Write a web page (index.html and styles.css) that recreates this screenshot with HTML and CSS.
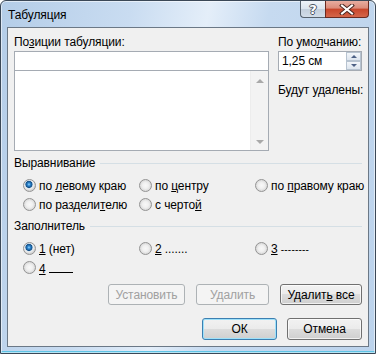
FILE: index.html
```html
<!DOCTYPE html>
<html lang="ru">
<head>
  <meta charset="UTF-8">
  <title>Табуляция</title>
  <link rel="stylesheet" href="styles.css">
</head>
<body>

  <div class="window">
    <!-- Title bar with caption buttons -->
    <div class="titlebar">
      <span class="title">Табуляция</span>
      <div class="caption-buttons">
        <span class="cap-btn cap-help">?</span>
        <span class="cap-btn cap-close">
          <svg width="16" height="11" viewBox="0 0 16 11">
            <path d="M3 1.5 L13 9.5 M13 1.5 L3 9.5" stroke="#4a2620" stroke-width="4" stroke-linecap="square"/>
            <path d="M3 1.5 L13 9.5 M13 1.5 L3 9.5" stroke="#ffffff" stroke-width="2" stroke-linecap="square"/>
          </svg>
        </span>
      </div>
    </div>

    <div class="client">
      <!-- Tab positions and default step -->
      <div class="top-area">
        <div class="col-left">
          <div class="label">По<u>з</u>иции табуляции:</div>
          <div class="edit"></div>
          <div class="listbox">
            <div class="list-body"></div>
            <div class="vscroll">
              <span class="arrow arrow-up"></span>
              <span class="arrow arrow-down"></span>
            </div>
          </div>
        </div>
        <div class="col-right">
          <div class="label">По умо<u>л</u>чанию:</div>
          <div class="spin">
            <span class="spin-value">1,25 см</span>
            <div class="spin-btns">
              <span class="spin-btn"><span class="tri tri-up"></span></span>
              <span class="spin-btn"><span class="tri tri-down"></span></span>
            </div>
          </div>
          <div class="label removed">Будут удалены:</div>
        </div>
      </div>

      <!-- Alignment -->
      <div class="group-head"><span>Выравнивание</span><span class="rule"></span></div>
      <div class="radio-grid">
        <label class="option"><span class="radio checked"></span><span>по <u>л</u>евому краю</span></label>
        <label class="option"><span class="radio"></span><span>по <u>ц</u>ентру</span></label>
        <label class="option"><span class="radio"></span><span>по <u>п</u>равому краю</span></label>
        <label class="option"><span class="radio"></span><span>по раздели<u>т</u>елю</span></label>
        <label class="option"><span class="radio"></span><span>с черто<u>й</u></span></label>
      </div>

      <!-- Leader -->
      <div class="group-head"><span>Заполнитель</span><span class="rule"></span></div>
      <div class="radio-grid">
        <label class="option"><span class="radio checked"></span><span><u>1</u> (нет)</span></label>
        <label class="option"><span class="radio"></span><span><u>2</u> .......</span></label>
        <label class="option"><span class="radio"></span><span><u>3</u> <span class="dashes">--------</span></span></label>
        <label class="option"><span class="radio"></span><span><u>4</u> <span class="leader-line"></span></span></label>
      </div>

      <!-- Buttons -->
      <div class="btn-row">
        <button class="btn btn-set" disabled>Установить</button>
        <button class="btn btn-del" disabled>Удалить</button>
        <button class="btn btn-delall">Удалит<u>ь</u> все</button>
      </div>
      <div class="btn-row btn-row-main">
        <button class="btn btn-main btn-default">ОК</button>
        <button class="btn btn-main">Отмена</button>
      </div>
    </div>
  </div>

</body>
</html>
```

FILE: styles.css
```css
/* Page reset */
body {
  margin: 0;
  background: #ffffff;
  font-family: 'Liberation Sans', Arial, sans-serif;
  font-size: 12px;
  letter-spacing: -0.1px;
  color: #000;
}

/* Aero window frame */
.window {
  width: 376px;
  height: 354px;
  box-sizing: border-box;
  border: 1px solid #3b4857;
  border-radius: 6px 6px 0 0;
  padding: 0 6px 6px 6px;
  background: linear-gradient(100deg, #b4cde8 0%, #c9dcf1 30%, #e4eef9 48%, #c6daf0 62%, #bcd3ec 100%);
  box-shadow: inset 0 0 0 1px rgba(255, 255, 255, 0.55), inset 0 -2px 0 #5fc4e6;
  display: flex;
  flex-direction: column;
}

.titlebar {
  height: 26px;
  display: flex;
  align-items: flex-start;
}

.title {
  margin: 7px 0 0 1px;
  line-height: 15px;
  font-size: 12px;
}

.caption-buttons {
  margin-left: auto;
  display: flex;
}

.cap-btn {
  height: 17px;
  box-sizing: border-box;
  border: 1px solid #57626e;
  border-top: none;
  display: flex;
  align-items: center;
  justify-content: center;
}

.cap-help {
  width: 25px;
  border-right: none;
  border-radius: 0 0 0 4px;
  background: linear-gradient(#eef3f8 0%, #dbe4ee 50%, #c3cfdc 51%, #d2dde8 100%);
  font-family: 'DejaVu Sans', sans-serif;
  font-weight: bold;
  font-size: 13px;
  color: #fff;
  text-shadow: -1px 0 #4a5563, 1px 0 #4a5563, 0 -1px #4a5563, 0 1px #4a5563;
}

.cap-close {
  width: 44px;
  border-color: #6a2a20;
  border-radius: 0 0 4px 0;
  background: linear-gradient(#e8ada0 0%, #dc8b79 45%, #c8452a 50%, #d4664a 100%);
}

/* Client area */
.client {
  flex: 1;
  border: 1px solid #6b7886;
  background: #f0f0f0;
  padding: 7px 6px 0 6px;
}

.top-area {
  display: grid;
  grid-template-columns: 255px 84px;
  column-gap: 9px;
}

.label {
  line-height: 15px;
  height: 15px;
  margin-bottom: 1px;
  white-space: nowrap;
}

.label.removed {
  margin-top: 12px;
}

.edit {
  height: 20px;
  box-sizing: border-box;
  border: 1px solid #a5abb3;
  background: #fff;
}

.listbox {
  height: 80px;
  box-sizing: border-box;
  border: 1px solid #a5abb3;
  border-top: none;
  background: #fff;
  display: flex;
}

.list-body {
  flex: 1;
}

.vscroll {
  width: 17px;
  background: #f3f3f3;
  border-left: 1px solid #ededed;
  display: flex;
  flex-direction: column;
  justify-content: space-between;
  align-items: center;
  padding: 8px 0 6px;
}

.arrow {
  width: 0;
  height: 0;
  border-left: 4px solid transparent;
  border-right: 4px solid transparent;
}

.arrow-up {
  border-bottom: 4px solid #a9a9a9;
}

.arrow-down {
  border-top: 4px solid #a9a9a9;
}

.spin {
  height: 20px;
  box-sizing: border-box;
  border: 1px solid #a5abb3;
  background: #fff;
  display: flex;
  align-items: center;
  padding-left: 3px;
}

.spin-value {
  flex: 1;
  line-height: 15px;
  white-space: nowrap;
}

.spin-btns {
  display: flex;
  flex-direction: column;
  align-self: stretch;
}

.spin-btn {
  width: 15px;
  height: 9px;
  box-sizing: border-box;
  border: 1px solid #b7c3d0;
  background: linear-gradient(#f3f6fa, #dde5ee);
  display: flex;
  align-items: center;
  justify-content: center;
}

.tri {
  width: 0;
  height: 0;
  border-left: 3px solid transparent;
  border-right: 3px solid transparent;
}

.tri-up {
  border-bottom: 3px solid #4d6185;
}

.tri-down {
  border-top: 3px solid #4d6185;
}

/* Group headers with rule */
.group-head {
  display: flex;
  align-items: center;
  line-height: 15px;
  margin-top: 5px;
}

.group-head .rule {
  flex: 1;
  height: 1px;
  background: #d5dfe5;
  margin-left: 5px;
}

.radio-grid {
  display: grid;
  grid-template-columns: 116px 116px 116px;
  grid-auto-rows: 19px;
  padding-left: 9px;
  margin-top: 5px;
}

.option {
  display: flex;
  align-items: center;
  gap: 3px;
  white-space: nowrap;
}

.radio {
  width: 13px;
  height: 13px;
  box-sizing: border-box;
  border-radius: 50%;
  border: 1px solid #939393;
  background: radial-gradient(circle at 50% 50%, #f8f8f8 0, #f0f0f0 3px, #d6d6d6 6px);
  flex-shrink: 0;
}

.radio.checked {
  background: radial-gradient(circle at 45% 40%, #9ad6ff 0, #2a86d0 1.5px, #164f86 3.2px, #c3d9ea 3.8px, #eeeeee 4.5px, #d4d4d4 6px);
}

.dashes {
  font-size: 10px;
  letter-spacing: 0.2px;
}

.leader-line {
  display: inline-block;
  width: 24px;
  height: 12px;
  border-bottom: 1px solid #000;
  vertical-align: baseline;
}

/* Push buttons */
.btn-row {
  display: flex;
  justify-content: flex-end;
  gap: 11px;
  margin-top: 7px;
}

.btn-row-main {
  margin-top: 13px;
  gap: 10px;
}

.btn {
  height: 21px;
  box-sizing: border-box;
  border: 1px solid #707070;
  border-radius: 3px;
  background: linear-gradient(#f2f2f2 0%, #ebebeb 49%, #dddddd 50%, #cfcfcf 100%);
  box-shadow: inset 0 0 0 1px rgba(255, 255, 255, 0.7);
  font-family: inherit;
  font-size: 12px;
  letter-spacing: inherit;
  color: #000;
  padding: 0;
}

.btn:disabled {
  border-color: #adb2b5;
  background: #f4f4f4;
  box-shadow: none;
  color: #a0a0a0;
}

.btn-set {
  width: 77px;
}

.btn-del {
  width: 73px;
}

.btn-delall {
  width: 82px;
}

.btn-main {
  width: 75px;
  height: 22px;
}

.btn-default {
  border-color: #3c7fb1;
  box-shadow: inset 0 0 0 1px #9ee1fa;
}
```
